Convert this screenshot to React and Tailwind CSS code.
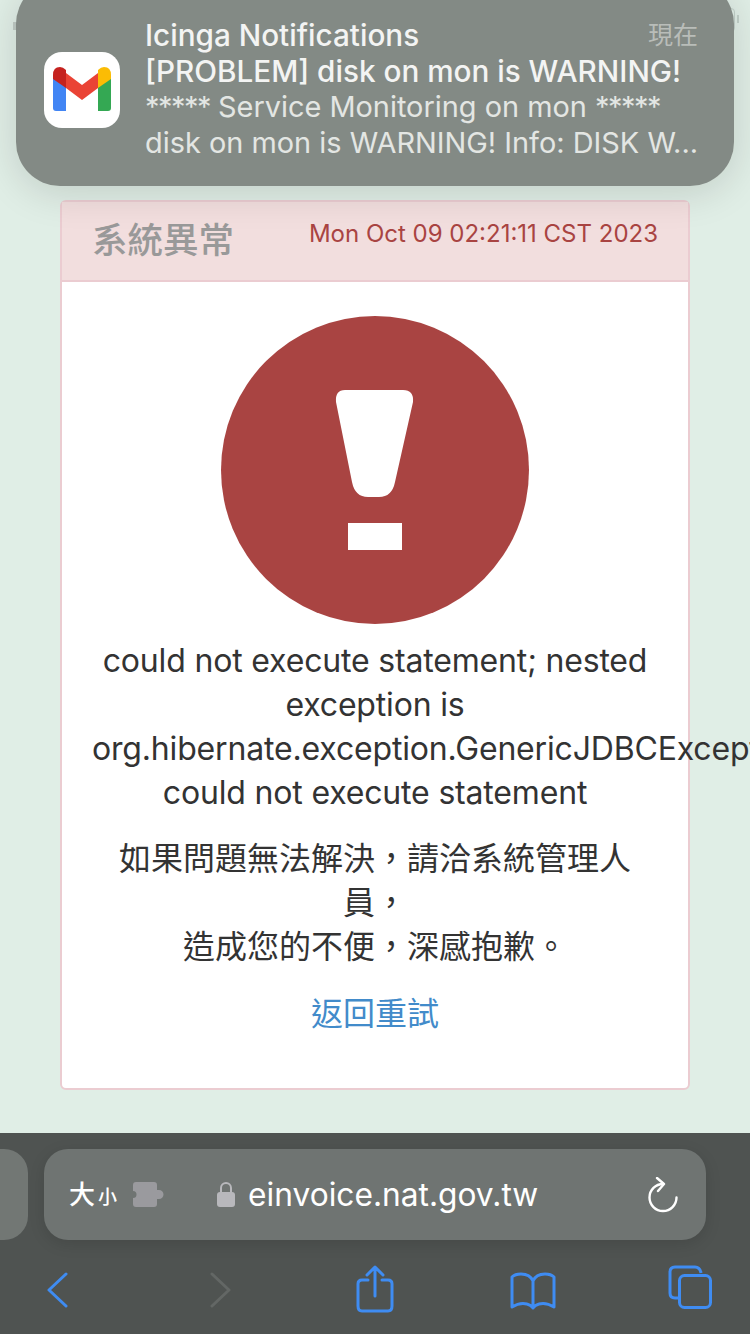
const sans = 'font-["Inter","Noto_Sans_CJK_TC",sans-serif]';

const GmailIcon = () => (
  <svg width="76" height="76" viewBox="0 0 76 76" className="shrink-0">
    <rect width="76" height="76" rx="18" fill="#fff" />
    <path d="M9 24L22 34V59H12Q9 59 9 56Z" fill="#4285f4" />
    <path d="M67 24L54 34V59H64Q67 59 67 56Z" fill="#34a853" />
    <path d="M22 21L38 33L54 21V36L38 48L22 36Z" fill="#ea4335" />
    <path d="M9 27V23Q9 15 16 15Q19 15 22 18V36Z" fill="#c5221f" />
    <path d="M67 27V23Q67 15 60 15Q57 15 54 18V36Z" fill="#fbbc04" />
  </svg>
);

const Notification = () => (
  <div className={`absolute left-4 top-[-20px] flex h-[206px] w-[718px] items-center rounded-[44px] bg-[#838a85] pl-7 pr-9 pt-[12px] shadow-[0_6px_40px_rgba(0,0,0,0.14)] ${sans}`}>
    <div className="mt-[2px]">
      <GmailIcon />
    </div>
    <div className="ml-[25px] min-w-0 flex-1 text-[28.9px] leading-[36px]">
      <div className="flex items-center justify-between">
        <span className="text-[29.7px] font-medium text-[#f3f4f3]">Icinga Notifications</span>
        <span className="text-[25px] text-[#b9bdb9]">現在</span>
      </div>
      <div className="whitespace-nowrap text-[29.7px] font-medium text-[#f3f4f3]">[PROBLEM] disk on mon is WARNING!</div>
      <div className="whitespace-nowrap text-[#e3e6e3]">
        <span className="tracking-[-1.5px]">*****</span> Service Monitoring on mon <span className="tracking-[-1.5px]">*****</span>
      </div>
      <div className="whitespace-nowrap text-[#e3e6e3]">disk on mon is WARNING! Info: DISK W...</div>
    </div>
  </div>
);

const ErrorCard = () => (
  <div className={`mx-auto mt-[200px] w-[630px] rounded-md border-2 border-[#ebccd1] bg-white text-[#333] ${sans}`}>
    <div className="flex h-[80px] justify-between border-b-2 border-[#ebccd1] bg-[#f2dede] pl-[30px] pr-[30px]">
      <span className="mt-[17px] text-[35.5px] font-medium leading-[44px] text-[#999]">系統異常</span>
      <span className="mt-[16px] text-[24px] leading-[32px] text-[#a94442]">Mon Oct 09 02:21:11 CST 2023</span>
    </div>
    <div className="px-[30px] pb-[52px] pt-[34px] text-center text-[32px] leading-[44px]">
      <svg width="308" height="308" viewBox="0 0 308 308" className="mx-auto">
        <circle cx="154" cy="154" r="154" fill="#a94442" />
        <path d="M124 74H182Q193 74 192 86L174 166Q171 181 158 181H147Q134 181 131 166L115 86Q114 74 124 74Z" fill="#fff" />
        <rect x="127" y="207" width="54" height="27" fill="#fff" />
      </svg>
      <p className="mt-[15px] tracking-[-0.17px]">
        could not execute statement; nested exception is org.hibernate.exception.GenericJDBCException: could not execute statement
      </p>
      <p className="mt-[22px]">
        如果問題無法解決，請洽系統管理人員，
        <br />
        造成您的不便，深感抱歉。
      </p>
      <p className="mt-[23px] text-[#428bca]">返回重試</p>
    </div>
  </div>
);

const Toolbar = () => (
  <div className={`h-[201px] bg-[#4f5351] pt-4 ${sans}`}>
    <div className="flex">
      <div className="h-[91px] w-7 rounded-r-[24px] bg-[#727774]" />
      <div className="ml-4 flex h-[91px] w-[662px] items-center rounded-[24px] bg-[#6f7472] pl-[25px] pr-[28px] text-white shadow-[0_4px_16px_rgba(0,0,0,0.12)]">
        <span className="text-[26px] font-medium leading-none">大</span>
        <span className="ml-[3px] mt-[5px] text-[19px] font-medium leading-none">小</span>
        <svg width="31" height="25" viewBox="0 0 31 25" className="ml-[16px]" fill="#9a9a9e">
          <path d="M3 0H21Q24 0 24 3V8H26A4.5 4.5 0 0 1 26 17H24V22Q24 25 21 25H3Q0 25 0 22V16A3.5 3.5 0 0 0 0 9V3Q0 0 3 0Z" />
        </svg>
        <svg width="18" height="25" viewBox="0 0 18 25" className="ml-[53px]">
          <path d="M4 11V6A5 5 0 0 1 14 6V11" fill="none" stroke="#b8b8bc" strokeWidth="2" />
          <rect y="10" width="18" height="15" rx="3" fill="#b8b8bc" />
        </svg>
        <span className="ml-[13px] text-[31.7px] leading-none">einvoice.nat.gov.tw</span>
        <svg width="30" height="36" viewBox="0 0 30 36" className="ml-auto" fill="none" stroke="#fff" strokeWidth="2.4" strokeLinecap="round" strokeLinejoin="round">
          <path d="M15 7A13.5 13.5 0 1 0 28.5 20.5" />
          <path d="M9 1L16 7L10 14" />
        </svg>
      </div>
    </div>
    <div className="mt-[25px] flex items-start pl-[47px]">
      <svg width="21" height="36" viewBox="0 0 21 36" className="mt-[7px]" fill="none" stroke="#3f8cf2" strokeWidth="3" strokeLinecap="round" strokeLinejoin="round">
        <path d="M19 2L2 18L19 34" />
      </svg>
      <svg width="21" height="36" viewBox="0 0 21 36" className="ml-[142px] mt-[7px]" fill="none" stroke="#636765" strokeWidth="3" strokeLinecap="round" strokeLinejoin="round">
        <path d="M2 2L19 18L2 34" />
      </svg>
      <svg width="38" height="48" viewBox="0 0 38 48" className="ml-[125px]" fill="none" stroke="#3f8cf2" strokeWidth="3" strokeLinecap="round" strokeLinejoin="round">
        <path d="M12 15H6Q2 15 2 19V41Q2 46 6 46H32Q36 46 36 41V19Q36 15 32 15H26" />
        <path d="M19 31V2M11 10L19 2L27 10" />
      </svg>
      <svg width="46" height="38" viewBox="0 0 46 38" className="ml-[116px] mt-[7px]" fill="none" stroke="#3f8cf2" strokeWidth="3" strokeLinecap="round" strokeLinejoin="round">
        <path d="M23 9Q20 2 11 2Q5 2 2 5V35Q10 30 17 32Q21 33 23 36Q25 33 29 32Q36 30 44 35V5Q41 2 35 2Q26 2 23 9V36" />
      </svg>
      <svg width="44" height="44" viewBox="0 0 44 44" className="ml-[112px]" fill="none" stroke="#3f8cf2" strokeWidth="3" strokeLinejoin="round">
        <path d="M11 33H7Q2 33 2 28V7Q2 2 7 2H27Q32 2 33 8" />
        <rect x="11.5" y="10.5" width="31" height="32" rx="5" />
      </svg>
    </div>
  </div>
);

export default function App() {
  return (
    <div className="relative flex h-[1334px] w-[750px] flex-col overflow-hidden bg-[#e0eee6]">
      <div className="flex-1">
        <ErrorCard />
      </div>
      <Toolbar />
      {/* status bar bits peeking out from behind the banner */}
      <div className="absolute left-[13px] top-[22px] h-2 w-[6px] bg-[#c0cbc5]" />
      <div className="absolute left-[722px] top-[8px] h-[24px] w-[13px] rounded border border-[#c2d0c9]" />
      <div className="absolute left-[737px] top-[15px] h-2 w-[2px] bg-[#c2d0c9]" />
      <Notification />
    </div>
  );
}
